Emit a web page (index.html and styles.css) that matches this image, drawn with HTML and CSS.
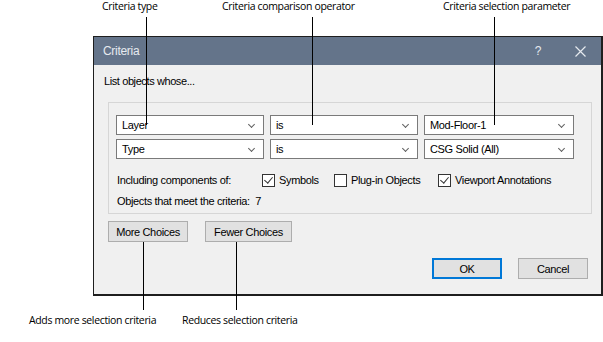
FILE: index.html
```html
<!DOCTYPE html>
<html lang="en">
<head>
    <meta charset="UTF-8">
    <title>Criteria</title>
    <link rel="stylesheet" href="styles.css">
</head>
<body>
    <div class="figure">
        <!-- callouts on top -->
        <span class="note note-type">Criteria type</span>
        <span class="note note-op">Criteria comparison operator</span>
        <span class="note note-param">Criteria selection parameter</span>
        <span class="line line-type"></span>
        <span class="line line-op"></span>
        <span class="line line-param"></span>

        <div class="dialog">
            <div class="titlebar">
                <span class="title">Criteria</span>
                <span class="help">?</span>
                <span class="close">
                    <svg width="11" height="11" viewBox="0 0 11 11"><path d="M0.5 0.5 L10.5 10.5 M10.5 0.5 L0.5 10.5" stroke="#e6eaef" stroke-width="1.2" fill="none"/></svg>
                </span>
            </div>
            <div class="content">
                <div class="intro">List objects whose...</div>
                <div class="group">
                    <div class="row">
                        <div class="select s1">Layer<i class="chev"></i></div>
                        <div class="select s2">is<i class="chev"></i></div>
                        <div class="select s3">Mod-Floor-1<i class="chev"></i></div>
                    </div>
                    <div class="row">
                        <div class="select s1">Type<i class="chev"></i></div>
                        <div class="select s2">is<i class="chev"></i></div>
                        <div class="select s3">CSG Solid (All)<i class="chev"></i></div>
                    </div>
                    <div class="include">
                        <span class="inc-label">Including components of:</span>
                        <span class="check c-sym"><b class="box on"></b>Symbols</span>
                        <span class="check c-plug"><b class="box"></b>Plug-in Objects</span>
                        <span class="check c-view"><b class="box on"></b>Viewport Annotations</span>
                    </div>
                    <div class="count">Objects that meet the criteria:&nbsp; 7</div>
                </div>
                <div class="choices">
                    <button class="btn btn-more">More Choices</button>
                    <button class="btn btn-fewer">Fewer Choices</button>
                </div>
                <div class="actions">
                    <button class="btn btn-ok">OK</button>
                    <button class="btn btn-cancel">Cancel</button>
                </div>
            </div>
        </div>

        <!-- callouts below -->
        <span class="line line-more"></span>
        <span class="line line-fewer"></span>
        <span class="note note-more">Adds more selection criteria</span>
        <span class="note note-fewer">Reduces selection criteria</span>
    </div>
</body>
</html>
```

FILE: styles.css
```css
body {
    margin: 0;
    background: #fff;
    font-family: "Liberation Sans", Arial, sans-serif;
    font-size: 11px;
    color: #000;
}

.figure {
    position: relative;
    width: 603px;
    height: 342px;
    overflow: hidden;
}

/* callouts */
.note {
    position: absolute;
    font-family: "Open Sans", sans-serif;
    font-size: 10.5px;
    letter-spacing: -0.35px;
    white-space: nowrap;
    line-height: 12px;
}
.note-type { left: 102px; top: 0; }
.note-op { left: 222px; top: 0; }
.note-param { left: 443px; top: 0; }
.note-more { left: 29px; top: 314px; }
.note-fewer { left: 182px; top: 314px; }

.line {
    position: absolute;
    width: 1px;
    background: #000;
    z-index: 2;
}
.line-type { left: 146px; top: 17px; height: 108px; }
.line-op { left: 312px; top: 17px; height: 108px; }
.line-param { left: 494px; top: 17px; height: 108px; }
.line-more { left: 143px; top: 242px; height: 68px; }
.line-fewer { left: 236px; top: 242px; height: 68px; }

/* dialog */
.dialog {
    margin: 36px 0 0 93px;
    width: 507px;
    height: 257px;
    border: 1px solid #1e1e1e;
    border-bottom-width: 2px;
    border-right-width: 2px;
    background: #f0f0f0;
}

.titlebar {
    display: flex;
    align-items: center;
    height: 28px;
    background: #64748a;
    color: #e6eaef;
    font-size: 12px;
    letter-spacing: -0.3px;
}
.title { flex: 1; padding-left: 9px; }
.help { width: 42px; text-align: center; font-size: 12px; }
.close { width: 42px; display: flex; justify-content: center; }

.content {
    padding: 10px 0 0 10px;
}

.intro {
    letter-spacing: -0.4px;
    line-height: 13px;
}

.group {
    margin: 14px 0 0 4px;
    width: 482px;
    height: 110px;
    border: 1px solid #d6d6d6;
    box-sizing: content-box;
    padding: 0;
}

.row {
    display: flex;
    gap: 8px;
    margin: 12px 0 0 7px;
}
.row + .row { margin-top: 4px; }

.select {
    position: relative;
    height: 18px;
    line-height: 18px;
    background: #fff;
    border: 1px solid #7a7a7a;
    padding-left: 5px;
    letter-spacing: -0.35px;
    box-sizing: content-box;
}
.s1 { width: 141px; }
.s2 { width: 141px; margin-left: -2px; }
.s3 { width: 143px; margin-left: -2px; }

.chev {
    position: absolute;
    right: 9px;
    top: 6px;
    width: 4px;
    height: 4px;
    border-right: 1px solid #606060;
    border-bottom: 1px solid #606060;
    transform: rotate(45deg);
}

.include {
    display: flex;
    align-items: center;
    margin: 14px 0 0 8px;
    height: 14px;
    letter-spacing: -0.35px;
}
.inc-label { width: 145px; }

.check {
    display: flex;
    align-items: center;
    gap: 4px;
}
.c-sym { width: 72px; }
.c-plug { width: 104px; }

.box {
    position: relative;
    width: 11px;
    height: 11px;
    border: 1px solid #333;
    background: #fff;
}
.box.on::after {
    content: "";
    position: absolute;
    left: 3px;
    top: 0;
    width: 4px;
    height: 7px;
    border-right: 1px solid #333;
    border-bottom: 1px solid #333;
    transform: rotate(40deg);
}

.count {
    margin: 8px 0 0 8px;
    letter-spacing: -0.35px;
    line-height: 13px;
}

.choices {
    display: flex;
    gap: 17px;
    margin: 7px 0 0 4px;
}

.btn {
    height: 21px;
    border: 1px solid #adadad;
    background: #e1e1e1;
    font-family: "Liberation Sans", Arial, sans-serif;
    font-size: 11px;
    letter-spacing: -0.35px;
    color: #000;
    padding: 0;
}
.btn-more { width: 80px; }
.btn-fewer { width: 87px; }

.actions {
    display: flex;
    justify-content: flex-end;
    gap: 16px;
    margin: 16px 13px 0 0;
}
.btn-ok { width: 70px; border: 2px solid #0078d7; }
.btn-cancel { width: 70px; }
```
